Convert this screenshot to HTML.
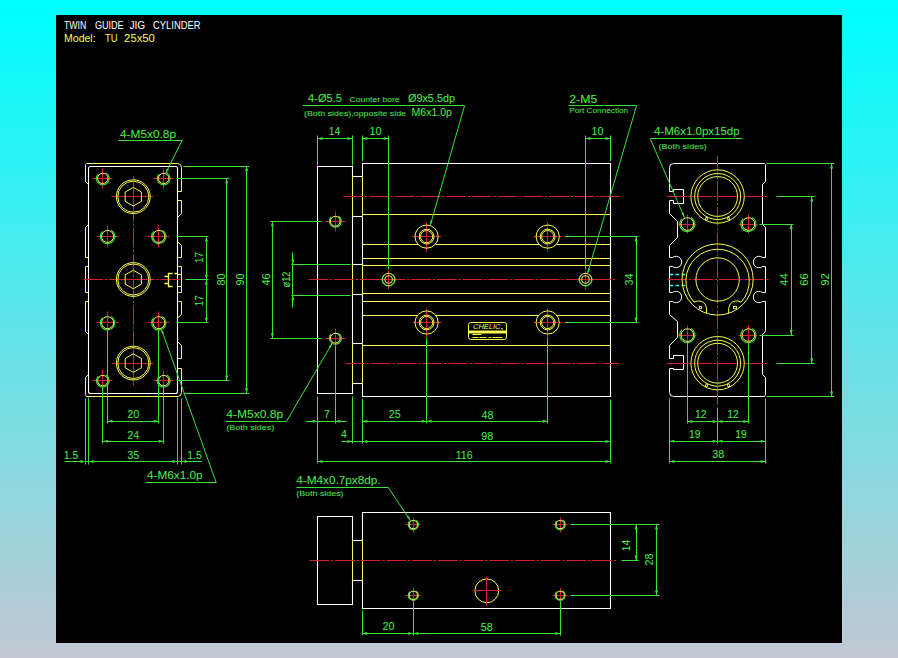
<!DOCTYPE html>
<html lang="en">
<head>
<meta charset="utf-8">
<title>TWIN GUIDE JIG CYLINDER - Model: TU 25x50</title>
<style>
html,body{margin:0;padding:0;}
body{width:898px;height:658px;overflow:hidden;background:linear-gradient(to bottom,#00ffff 0%,#00ffff 1%,#c1c8d3 100%);position:relative;font-family:"Liberation Sans",sans-serif;}
#sheet{position:absolute;left:56px;top:15px;width:786px;height:628px;background:#000;}
svg{position:absolute;left:0;top:0;font-family:"Liberation Sans",sans-serif;}
</style>
</head>
<body>
<div id="sheet"></div>
<svg width="898" height="658" viewBox="0 0 898 658" fill="none" stroke-linecap="butt">
<path d="M177.5,163.5 A4,4 0 0 1 181.5,167.5 L181.5,191.5 L177.5,191.5 L177.5,189.5 L167.5,189.5 L167.5,203.5 L177.5,203.5 L177.5,200.5 L181.5,200.5 L181.5,213.5 L173.5,221.5 L173.5,237.5 L181.5,245.5 L181.5,257.5 L178.5,257.5 A5.7,5.7 0 1 0 178.5,266.5 L181.5,266.5 L181.5,292.5 L178.5,292.5 A5.7,5.7 0 1 0 178.5,301.5 L181.5,301.5 L181.5,314.5 L173.5,321.5 L173.5,337.5 L181.5,345.5 L181.5,358.5 L177.5,358.5 L177.5,355.5 L167.5,355.5 L167.5,369.5 L177.5,369.5 L177.5,368.5 L181.5,368.5 L181.5,392.5 A4,4 0 0 1 177.5,396.5 L86.5,396.5 L85.5,394.5 L85.5,377.5 L88.5,374.5 L88.5,334.5 L85.5,331.5 L85.5,301.5 L88.5,301.5 A5.7,5.7 0 1 0 88.5,292.5 L85.5,292.5 L85.5,266.5 L88.5,266.5 A5.7,5.7 0 1 0 88.5,257.5 L85.5,257.5 L85.5,227.5 L88.5,224.5 L88.5,184.5 L85.5,181.5 L85.5,164.5 L86.5,163.5 Z" stroke="#fafa50" stroke-width="1" fill="none"/>
<line x1="177.5" y1="274.5" x2="181.5" y2="274.5" stroke="#fafa50" stroke-width="1"/>
<line x1="177.5" y1="286.5" x2="181.5" y2="286.5" stroke="#fafa50" stroke-width="1"/>
<rect x="88.5" y="166.5" width="89" height="227" rx="2" stroke="#ffffff" stroke-width="1.1" fill="#000"/>
<line x1="83.5" y1="279.5" x2="182.5" y2="279.5" stroke="#d8202c" stroke-width="1" stroke-dasharray="19.7 1.8 2.4 1.8"/>
<line x1="133.5" y1="176.5" x2="133.5" y2="385.5" stroke="#d8202c" stroke-width="1" stroke-dasharray="19.7 1.8 2.4 1.8"/>
<path d="M172.5,273.5 H168.5 V286.5 H172.5 M174.5,273.5 H177.5 M164.5,276.5 H168.5 M164.5,283.5 H168.5" stroke="#fafa50" stroke-width="1.3" fill="none"/>
<line x1="92.5" y1="178.5" x2="112.5" y2="178.5" stroke="#d8202c" stroke-width="1"/>
<line x1="102.5" y1="168.5" x2="102.5" y2="188.5" stroke="#d8202c" stroke-width="1"/>
<path d="M106,172.9 A6.4,6.4 0 1 1 98.3,173.9" stroke="#3ce03c" stroke-width="1.1" fill="none"/>
<circle cx="102.8" cy="178.4" r="5.2" stroke="#fafa50" stroke-width="1" fill="none"/>
<line x1="153.5" y1="178.5" x2="173.5" y2="178.5" stroke="#d8202c" stroke-width="1"/>
<line x1="163.5" y1="168.5" x2="163.5" y2="188.5" stroke="#d8202c" stroke-width="1"/>
<path d="M166.9,172.9 A6.4,6.4 0 1 1 159.2,173.9" stroke="#3ce03c" stroke-width="1.1" fill="none"/>
<circle cx="163.7" cy="178.4" r="5.2" stroke="#fafa50" stroke-width="1" fill="none"/>
<line x1="92.5" y1="380.5" x2="112.5" y2="380.5" stroke="#d8202c" stroke-width="1"/>
<line x1="102.5" y1="370.5" x2="102.5" y2="390.5" stroke="#d8202c" stroke-width="1"/>
<path d="M106,375.1 A6.4,6.4 0 1 1 98.3,376.1" stroke="#3ce03c" stroke-width="1.1" fill="none"/>
<circle cx="102.8" cy="380.6" r="5.2" stroke="#fafa50" stroke-width="1" fill="none"/>
<line x1="153.5" y1="380.5" x2="173.5" y2="380.5" stroke="#d8202c" stroke-width="1"/>
<line x1="163.5" y1="370.5" x2="163.5" y2="390.5" stroke="#d8202c" stroke-width="1"/>
<path d="M166.9,375.1 A6.4,6.4 0 1 1 159.2,376.1" stroke="#3ce03c" stroke-width="1.1" fill="none"/>
<circle cx="163.7" cy="380.6" r="5.2" stroke="#fafa50" stroke-width="1" fill="none"/>
<line x1="96.5" y1="236.5" x2="118.5" y2="236.5" stroke="#d8202c" stroke-width="1"/>
<line x1="107.5" y1="225.5" x2="107.5" y2="247.5" stroke="#d8202c" stroke-width="1"/>
<path d="M111.2,230.2 A7.2,7.2 0 1 1 102.5,231.3" stroke="#3ce03c" stroke-width="1.1" fill="none"/>
<circle cx="107.6" cy="236.4" r="6" stroke="#fafa50" stroke-width="1" fill="none"/>
<line x1="147.5" y1="236.5" x2="169.5" y2="236.5" stroke="#d8202c" stroke-width="1"/>
<line x1="158.5" y1="225.5" x2="158.5" y2="247.5" stroke="#d8202c" stroke-width="1"/>
<path d="M162.4,230.2 A7.2,7.2 0 1 1 153.7,231.3" stroke="#3ce03c" stroke-width="1.1" fill="none"/>
<circle cx="158.8" cy="236.4" r="6" stroke="#fafa50" stroke-width="1" fill="none"/>
<line x1="96.5" y1="322.5" x2="118.5" y2="322.5" stroke="#d8202c" stroke-width="1"/>
<line x1="107.5" y1="311.5" x2="107.5" y2="333.5" stroke="#d8202c" stroke-width="1"/>
<path d="M111.2,316.5 A7.2,7.2 0 1 1 102.5,317.6" stroke="#3ce03c" stroke-width="1.1" fill="none"/>
<circle cx="107.6" cy="322.7" r="6" stroke="#fafa50" stroke-width="1" fill="none"/>
<line x1="147.5" y1="322.5" x2="169.5" y2="322.5" stroke="#d8202c" stroke-width="1"/>
<line x1="158.5" y1="311.5" x2="158.5" y2="333.5" stroke="#d8202c" stroke-width="1"/>
<path d="M162.4,316.5 A7.2,7.2 0 1 1 153.7,317.6" stroke="#3ce03c" stroke-width="1.1" fill="none"/>
<circle cx="158.8" cy="322.7" r="6" stroke="#fafa50" stroke-width="1" fill="none"/>
<line x1="111.5" y1="196.5" x2="153.5" y2="196.5" stroke="#d8202c" stroke-width="1"/>
<line x1="111.5" y1="279.5" x2="153.5" y2="279.5" stroke="#d8202c" stroke-width="1"/>
<line x1="111.5" y1="363.5" x2="153.5" y2="363.5" stroke="#d8202c" stroke-width="1"/>
<line x1="133.5" y1="176.5" x2="133.5" y2="218.5" stroke="#d8202c" stroke-width="1"/>
<line x1="133.5" y1="342.5" x2="133.5" y2="385.5" stroke="#d8202c" stroke-width="1"/>
<circle cx="133.3" cy="196.7" r="16.9" stroke="#fafa50" stroke-width="1" fill="none"/>
<circle cx="133.3" cy="196.7" r="15.5" stroke="#fafa50" stroke-width="1" fill="none"/>
<polygon points="133.3,187.4 141.4,192 141.4,201.3 133.3,206 125.2,201.3 125.2,192" fill="none" stroke="#fafa50" stroke-width="1"/>
<circle cx="133.3" cy="279.5" r="16.9" stroke="#fafa50" stroke-width="1" fill="none"/>
<circle cx="133.3" cy="279.5" r="15.5" stroke="#fafa50" stroke-width="1" fill="none"/>
<polygon points="133.3,270.2 141.4,274.9 141.4,284.1 133.3,288.8 125.2,284.1 125.2,274.9" fill="none" stroke="#fafa50" stroke-width="1"/>
<circle cx="133.3" cy="363.1" r="16.9" stroke="#fafa50" stroke-width="1" fill="none"/>
<circle cx="133.3" cy="363.1" r="15.5" stroke="#fafa50" stroke-width="1" fill="none"/>
<polygon points="133.3,353.8 141.4,358.5 141.4,367.8 133.3,372.4 125.2,367.8 125.2,358.5" fill="none" stroke="#fafa50" stroke-width="1"/>
<text x="120" y="137.6" fill="#48f048" font-size="10.5" text-anchor="start" textLength="56" lengthAdjust="spacingAndGlyphs">4-M5x0.8p</text>
<line x1="118.5" y1="140.5" x2="182.5" y2="140.5" stroke="#3ce03c" stroke-width="1"/>
<line x1="182" y1="140.5" x2="165.6" y2="173.6" stroke="#3ce03c" stroke-width="1"/>
<polygon points="165.6,173.6 166.7,168.6 168.9,169.7" fill="#3ce03c"/>
<line x1="185.5" y1="279.5" x2="208.5" y2="279.5" stroke="#3ce03c" stroke-width="1"/>
<line x1="176.5" y1="236.5" x2="208.5" y2="236.5" stroke="#3ce03c" stroke-width="1"/>
<line x1="176.5" y1="322.5" x2="208.5" y2="322.5" stroke="#3ce03c" stroke-width="1"/>
<line x1="206.5" y1="236.5" x2="206.5" y2="322.5" stroke="#3ce03c" stroke-width="1"/>
<polygon points="206.4,236.4 207.9,241.4 204.9,241.4" fill="#3ce03c"/>
<polygon points="206.4,279.5 204.9,274.5 207.9,274.5" fill="#3ce03c"/>
<polygon points="206.4,279.5 207.9,284.5 204.9,284.5" fill="#3ce03c"/>
<polygon points="206.4,322.7 204.9,317.7 207.9,317.7" fill="#3ce03c"/>
<text x="203" y="257.5" fill="#48f048" font-size="10.5" text-anchor="middle" textLength="11" lengthAdjust="spacingAndGlyphs" transform="rotate(-90 203 257.5)">17</text>
<text x="203" y="300.8" fill="#48f048" font-size="10.5" text-anchor="middle" textLength="11" lengthAdjust="spacingAndGlyphs" transform="rotate(-90 203 300.8)">17</text>
<line x1="176.5" y1="178.5" x2="229.5" y2="178.5" stroke="#3ce03c" stroke-width="1"/>
<line x1="176.5" y1="380.5" x2="229.5" y2="380.5" stroke="#3ce03c" stroke-width="1"/>
<line x1="226.5" y1="178.5" x2="226.5" y2="380.5" stroke="#3ce03c" stroke-width="1"/>
<polygon points="226.7,178.4 228.2,183.4 225.2,183.4" fill="#3ce03c"/>
<polygon points="226.7,380.6 225.2,375.6 228.2,375.6" fill="#3ce03c"/>
<text x="224.5" y="279.5" fill="#48f048" font-size="10.5" text-anchor="middle" textLength="12" lengthAdjust="spacingAndGlyphs" transform="rotate(-90 224.5 279.5)">80</text>
<line x1="183.5" y1="166.5" x2="249.5" y2="166.5" stroke="#3ce03c" stroke-width="1"/>
<line x1="183.5" y1="393.5" x2="249.5" y2="393.5" stroke="#3ce03c" stroke-width="1"/>
<line x1="246.5" y1="166.5" x2="246.5" y2="393.5" stroke="#3ce03c" stroke-width="1"/>
<polygon points="246.6,166.1 248.1,171.1 245.1,171.1" fill="#3ce03c"/>
<polygon points="246.6,393.3 245.1,388.3 248.1,388.3" fill="#3ce03c"/>
<text x="243.8" y="279.5" fill="#48f048" font-size="10.5" text-anchor="middle" textLength="12" lengthAdjust="spacingAndGlyphs" transform="rotate(-90 243.8 279.5)">90</text>
<line x1="85.5" y1="398.5" x2="85.5" y2="464.5" stroke="#3ce03c" stroke-width="1"/>
<line x1="88.5" y1="397.5" x2="88.5" y2="464.5" stroke="#3ce03c" stroke-width="1"/>
<line x1="102.5" y1="385.5" x2="102.5" y2="443.5" stroke="#3ce03c" stroke-width="1"/>
<line x1="107.5" y1="329.5" x2="107.5" y2="423.5" stroke="#3ce03c" stroke-width="1"/>
<line x1="158.5" y1="329.5" x2="158.5" y2="423.5" stroke="#3ce03c" stroke-width="1"/>
<line x1="163.5" y1="385.5" x2="163.5" y2="443.5" stroke="#3ce03c" stroke-width="1"/>
<line x1="177.5" y1="397.5" x2="177.5" y2="464.5" stroke="#3ce03c" stroke-width="1"/>
<line x1="181.5" y1="398.5" x2="181.5" y2="464.5" stroke="#3ce03c" stroke-width="1"/>
<line x1="107.5" y1="421.5" x2="158.5" y2="421.5" stroke="#3ce03c" stroke-width="1"/>
<polygon points="107.6,421.3 112.6,419.8 112.6,422.8" fill="#3ce03c"/>
<polygon points="158.8,421.3 153.8,422.8 153.8,419.8" fill="#3ce03c"/>
<text x="133.2" y="417.9" fill="#48f048" font-size="10.5" text-anchor="middle" textLength="12" lengthAdjust="spacingAndGlyphs">20</text>
<line x1="102.5" y1="441.5" x2="163.5" y2="441.5" stroke="#3ce03c" stroke-width="1"/>
<polygon points="102.8,441.3 107.8,439.8 107.8,442.8" fill="#3ce03c"/>
<polygon points="163.7,441.3 158.7,442.8 158.7,439.8" fill="#3ce03c"/>
<text x="133.2" y="438.8" fill="#48f048" font-size="10.5" text-anchor="middle" textLength="12" lengthAdjust="spacingAndGlyphs">24</text>
<line x1="64.5" y1="461.5" x2="201.5" y2="461.5" stroke="#3ce03c" stroke-width="1"/>
<polygon points="88.7,461.6 93.7,460.1 93.7,463.1" fill="#3ce03c"/>
<polygon points="177.5,461.6 172.5,463.1 172.5,460.1" fill="#3ce03c"/>
<polygon points="85.4,461.6 80.4,463.1 80.4,460.1" fill="#3ce03c"/>
<polygon points="181.3,461.6 186.3,460.1 186.3,463.1" fill="#3ce03c"/>
<text x="133.2" y="458.9" fill="#48f048" font-size="10.5" text-anchor="middle" textLength="12" lengthAdjust="spacingAndGlyphs">35</text>
<text x="63.8" y="459.3" fill="#48f048" font-size="10.5" text-anchor="start" textLength="14.5" lengthAdjust="spacingAndGlyphs">1.5</text>
<text x="187.2" y="459.3" fill="#48f048" font-size="10.5" text-anchor="start" textLength="14.5" lengthAdjust="spacingAndGlyphs">1.5</text>
<text x="147" y="478.7" fill="#48f048" font-size="10.5" text-anchor="start" textLength="55.5" lengthAdjust="spacingAndGlyphs">4-M6x1.0p</text>
<line x1="145.5" y1="482.5" x2="216.5" y2="482.5" stroke="#3ce03c" stroke-width="1"/>
<line x1="216.2" y1="482.5" x2="161.3" y2="329" stroke="#3ce03c" stroke-width="1"/>
<polygon points="161.3,329 164.1,333.3 161.9,334.1" fill="#3ce03c"/>
<path d="M362.5,176.5 V163.5 H610.5 V396.5 H362.5 V383.5" stroke="#ffffff" stroke-width="1.1" fill="none"/>
<path d="M352.5,176.5 V166.5 H317.5 V393.5 H352.5 V383.5" stroke="#ffffff" stroke-width="1.1" fill="none"/>
<line x1="352.5" y1="216.5" x2="352.5" y2="264.5" stroke="#ffffff" stroke-width="1.1"/>
<line x1="362.5" y1="216.5" x2="362.5" y2="264.5" stroke="#ffffff" stroke-width="1.1"/>
<line x1="352.5" y1="294.5" x2="352.5" y2="343.5" stroke="#ffffff" stroke-width="1.1"/>
<line x1="362.5" y1="294.5" x2="362.5" y2="343.5" stroke="#ffffff" stroke-width="1.1"/>
<line x1="352.5" y1="176.5" x2="352.5" y2="216.5" stroke="#fafa50" stroke-width="1"/>
<line x1="362.5" y1="176.5" x2="362.5" y2="216.5" stroke="#fafa50" stroke-width="1"/>
<line x1="352.5" y1="176.5" x2="362.5" y2="176.5" stroke="#ffffff" stroke-width="1.1"/>
<line x1="352.5" y1="216.5" x2="362.5" y2="216.5" stroke="#ffffff" stroke-width="1.1"/>
<line x1="352.5" y1="264.5" x2="352.5" y2="294.5" stroke="#fafa50" stroke-width="1"/>
<line x1="362.5" y1="264.5" x2="362.5" y2="294.5" stroke="#fafa50" stroke-width="1"/>
<line x1="352.5" y1="264.5" x2="362.5" y2="264.5" stroke="#ffffff" stroke-width="1.1"/>
<line x1="352.5" y1="294.5" x2="362.5" y2="294.5" stroke="#ffffff" stroke-width="1.1"/>
<line x1="352.5" y1="343.5" x2="352.5" y2="383.5" stroke="#fafa50" stroke-width="1"/>
<line x1="362.5" y1="343.5" x2="362.5" y2="383.5" stroke="#fafa50" stroke-width="1"/>
<line x1="352.5" y1="343.5" x2="362.5" y2="343.5" stroke="#ffffff" stroke-width="1.1"/>
<line x1="352.5" y1="383.5" x2="362.5" y2="383.5" stroke="#ffffff" stroke-width="1.1"/>
<line x1="362.5" y1="214.5" x2="610.5" y2="214.5" stroke="#fafa50" stroke-width="1"/>
<line x1="362.5" y1="258.5" x2="610.5" y2="258.5" stroke="#fafa50" stroke-width="1"/>
<line x1="362.5" y1="265.5" x2="610.5" y2="265.5" stroke="#fafa50" stroke-width="1"/>
<line x1="362.5" y1="293.5" x2="610.5" y2="293.5" stroke="#fafa50" stroke-width="1"/>
<line x1="362.5" y1="301.5" x2="610.5" y2="301.5" stroke="#fafa50" stroke-width="1"/>
<line x1="362.5" y1="345.5" x2="610.5" y2="345.5" stroke="#fafa50" stroke-width="1"/>
<line x1="362.5" y1="244.5" x2="418.5" y2="244.5" stroke="#fafa50" stroke-width="1"/>
<line x1="435.5" y1="244.5" x2="539.5" y2="244.5" stroke="#fafa50" stroke-width="1"/>
<line x1="556.5" y1="244.5" x2="610.5" y2="244.5" stroke="#fafa50" stroke-width="1"/>
<line x1="362.5" y1="315.5" x2="417.5" y2="315.5" stroke="#fafa50" stroke-width="1"/>
<line x1="435.5" y1="315.5" x2="538.5" y2="315.5" stroke="#fafa50" stroke-width="1"/>
<line x1="556.5" y1="315.5" x2="610.5" y2="315.5" stroke="#fafa50" stroke-width="1"/>
<line x1="343.5" y1="196.5" x2="620.5" y2="196.5" stroke="#d8202c" stroke-width="1" stroke-dasharray="19.7 1.8 2.4 1.8"/>
<line x1="308.5" y1="279.5" x2="616.5" y2="279.5" stroke="#d8202c" stroke-width="1" stroke-dasharray="19.7 1.8 2.4 1.8"/>
<line x1="345.5" y1="363.5" x2="618.5" y2="363.5" stroke="#d8202c" stroke-width="1" stroke-dasharray="19.7 1.8 2.4 1.8"/>
<line x1="325.5" y1="221.5" x2="345.5" y2="221.5" stroke="#d8202c" stroke-width="1"/>
<line x1="335.5" y1="211.5" x2="335.5" y2="231.5" stroke="#d8202c" stroke-width="1"/>
<path d="M338.3,216 A6,6 0 1 1 331.1,217" stroke="#3ce03c" stroke-width="1.1" fill="none"/>
<circle cx="335.3" cy="221.2" r="4.9" stroke="#fafa50" stroke-width="1" fill="none"/>
<line x1="325.5" y1="338.5" x2="345.5" y2="338.5" stroke="#d8202c" stroke-width="1"/>
<line x1="335.5" y1="328.5" x2="335.5" y2="348.5" stroke="#d8202c" stroke-width="1"/>
<path d="M338.3,333 A6,6 0 1 1 331.1,334" stroke="#3ce03c" stroke-width="1.1" fill="none"/>
<circle cx="335.3" cy="338.2" r="4.9" stroke="#fafa50" stroke-width="1" fill="none"/>
<line x1="412.5" y1="236.5" x2="441.5" y2="236.5" stroke="#d8202c" stroke-width="1"/>
<line x1="426.5" y1="222.5" x2="426.5" y2="251.5" stroke="#d8202c" stroke-width="1"/>
<circle cx="426.6" cy="236.6" r="11.6" stroke="#fafa50" stroke-width="1" fill="none"/>
<circle cx="426.6" cy="236.6" r="7.4" stroke="#fafa50" stroke-width="1" fill="none"/>
<circle cx="426.6" cy="236.6" r="6.1" stroke="#fafa50" stroke-width="1" fill="none"/>
<line x1="412.5" y1="322.5" x2="441.5" y2="322.5" stroke="#d8202c" stroke-width="1"/>
<line x1="426.5" y1="308.5" x2="426.5" y2="337.5" stroke="#d8202c" stroke-width="1"/>
<circle cx="426.6" cy="322.5" r="11.6" stroke="#fafa50" stroke-width="1" fill="none"/>
<circle cx="426.6" cy="322.5" r="7.4" stroke="#fafa50" stroke-width="1" fill="none"/>
<circle cx="426.6" cy="322.5" r="6.1" stroke="#fafa50" stroke-width="1" fill="none"/>
<line x1="533.5" y1="236.5" x2="562.5" y2="236.5" stroke="#d8202c" stroke-width="1"/>
<line x1="547.5" y1="222.5" x2="547.5" y2="251.5" stroke="#d8202c" stroke-width="1"/>
<circle cx="547.7" cy="236.6" r="11.6" stroke="#fafa50" stroke-width="1" fill="none"/>
<circle cx="547.7" cy="236.6" r="7.4" stroke="#fafa50" stroke-width="1" fill="none"/>
<circle cx="547.7" cy="236.6" r="6.1" stroke="#fafa50" stroke-width="1" fill="none"/>
<line x1="533.5" y1="322.5" x2="562.5" y2="322.5" stroke="#d8202c" stroke-width="1"/>
<line x1="547.5" y1="308.5" x2="547.5" y2="337.5" stroke="#d8202c" stroke-width="1"/>
<circle cx="547.7" cy="322.5" r="11.6" stroke="#fafa50" stroke-width="1" fill="none"/>
<circle cx="547.7" cy="322.5" r="7.4" stroke="#fafa50" stroke-width="1" fill="none"/>
<circle cx="547.7" cy="322.5" r="6.1" stroke="#fafa50" stroke-width="1" fill="none"/>
<line x1="379.5" y1="279.5" x2="398.5" y2="279.5" stroke="#d8202c" stroke-width="1"/>
<line x1="388.5" y1="270.5" x2="388.5" y2="289.5" stroke="#d8202c" stroke-width="1"/>
<circle cx="388.6" cy="279.5" r="6.2" stroke="#fafa50" stroke-width="1" fill="none"/>
<path d="M392.8,274.4 A6.6,6.6 0 1 1 384.4,274.4" stroke="#3ce03c" stroke-width="1" fill="none"/>
<circle cx="388.6" cy="279.5" r="3.9" stroke="#fafa50" stroke-width="1" fill="none"/>
<line x1="576.5" y1="279.5" x2="595.5" y2="279.5" stroke="#d8202c" stroke-width="1"/>
<line x1="585.5" y1="270.5" x2="585.5" y2="289.5" stroke="#d8202c" stroke-width="1"/>
<circle cx="585.5" cy="279.5" r="6.2" stroke="#fafa50" stroke-width="1" fill="none"/>
<path d="M589.7,274.4 A6.6,6.6 0 1 1 581.3,274.4" stroke="#3ce03c" stroke-width="1" fill="none"/>
<circle cx="585.5" cy="279.5" r="3.9" stroke="#fafa50" stroke-width="1" fill="none"/>
<rect x="468.5" y="322.5" width="38" height="17" rx="2.2" stroke="#fafa50" stroke-width="1" fill="none"/>
<rect x="468.5" y="330.5" width="38" height="3" rx="0" stroke="#fafa50" stroke-width="0" fill="#fafa50"/>
<text x="473" y="329.1" fill="#fafa50" font-size="6.6" text-anchor="start" textLength="27.5" lengthAdjust="spacingAndGlyphs" style="font-style:italic">CHELIC</text>
<path d="M472.5,334.5 H481.5 M472.5,337.5 H478.5 M479.5,337.5 H486.5 M488.5,337.5 H491.5 M492.5,337.5 H502.5" stroke="#fafa50" stroke-width="1.2" fill="none"/>
<path d="M501,328 l1.5,1.5 M502.5,328 l-1.5,1.5" stroke="#fafa50" stroke-width="0.8" fill="none"/>
<text x="308" y="102" fill="#48f048" font-size="10.5" text-anchor="start" textLength="34" lengthAdjust="spacingAndGlyphs">4-&#216;5.5</text>
<text x="349.6" y="102" fill="#48f048" font-size="7.8" text-anchor="start" textLength="50" lengthAdjust="spacingAndGlyphs">Counter bore</text>
<text x="408" y="102" fill="#48f048" font-size="10.5" text-anchor="start" textLength="47" lengthAdjust="spacingAndGlyphs">&#216;9x5.5dp</text>
<line x1="302.5" y1="105.5" x2="464.5" y2="105.5" stroke="#3ce03c" stroke-width="1"/>
<line x1="464.6" y1="105.5" x2="430.2" y2="225.6" stroke="#3ce03c" stroke-width="1"/>
<polygon points="430.2,225.6 430.4,220.5 432.7,221.1" fill="#3ce03c"/>
<text x="304" y="115.9" fill="#48f048" font-size="7.8" text-anchor="start" textLength="102" lengthAdjust="spacingAndGlyphs">(Both sides),opposite side</text>
<text x="411.5" y="115.9" fill="#48f048" font-size="10.5" text-anchor="start" textLength="40.5" lengthAdjust="spacingAndGlyphs">M6x1.0p</text>
<text x="569.2" y="102.9" fill="#48f048" font-size="10.5" text-anchor="start" textLength="28.2" lengthAdjust="spacingAndGlyphs">2-M5</text>
<line x1="568.5" y1="105.5" x2="636.5" y2="105.5" stroke="#3ce03c" stroke-width="1"/>
<line x1="636.6" y1="105.5" x2="587.6" y2="273.4" stroke="#3ce03c" stroke-width="1"/>
<polygon points="587.6,273.4 587.8,268.3 590.2,268.9" fill="#3ce03c"/>
<text x="569.2" y="113.4" fill="#48f048" font-size="7.8" text-anchor="start" textLength="59" lengthAdjust="spacingAndGlyphs">Port Connection</text>
<line x1="317.5" y1="135.5" x2="317.5" y2="165.5" stroke="#3ce03c" stroke-width="1"/>
<line x1="352.5" y1="135.5" x2="352.5" y2="165.5" stroke="#3ce03c" stroke-width="1"/>
<line x1="317.5" y1="138.5" x2="352.5" y2="138.5" stroke="#3ce03c" stroke-width="1"/>
<polygon points="317.5,138.6 322.5,137.1 322.5,140.1" fill="#3ce03c"/>
<polygon points="352.5,138.6 347.5,140.1 347.5,137.1" fill="#3ce03c"/>
<text x="334.6" y="134.7" fill="#48f048" font-size="10.5" text-anchor="middle" textLength="11.5" lengthAdjust="spacingAndGlyphs">14</text>
<line x1="362.5" y1="135.5" x2="362.5" y2="161.5" stroke="#3ce03c" stroke-width="1"/>
<line x1="388.5" y1="135.5" x2="388.5" y2="269.5" stroke="#3ce03c" stroke-width="1"/>
<line x1="362.5" y1="138.5" x2="388.5" y2="138.5" stroke="#3ce03c" stroke-width="1"/>
<polygon points="362.4,138.6 367.4,137.1 367.4,140.1" fill="#3ce03c"/>
<polygon points="388.6,138.6 383.6,140.1 383.6,137.1" fill="#3ce03c"/>
<text x="375.5" y="134.7" fill="#48f048" font-size="10.5" text-anchor="middle" textLength="12" lengthAdjust="spacingAndGlyphs">10</text>
<line x1="585.5" y1="135.5" x2="585.5" y2="269.5" stroke="#3ce03c" stroke-width="1"/>
<line x1="610.5" y1="135.5" x2="610.5" y2="161.5" stroke="#3ce03c" stroke-width="1"/>
<line x1="585.5" y1="138.5" x2="610.5" y2="138.5" stroke="#3ce03c" stroke-width="1"/>
<polygon points="585.5,138.6 590.5,137.1 590.5,140.1" fill="#3ce03c"/>
<polygon points="610.4,138.6 605.4,140.1 605.4,137.1" fill="#3ce03c"/>
<text x="597.6" y="134.7" fill="#48f048" font-size="10.5" text-anchor="middle" textLength="12" lengthAdjust="spacingAndGlyphs">10</text>
<line x1="270.5" y1="221.5" x2="321.5" y2="221.5" stroke="#3ce03c" stroke-width="1"/>
<line x1="270.5" y1="338.5" x2="321.5" y2="338.5" stroke="#3ce03c" stroke-width="1"/>
<line x1="272.5" y1="221.5" x2="272.5" y2="338.5" stroke="#3ce03c" stroke-width="1"/>
<polygon points="272.4,221.2 273.9,226.2 270.9,226.2" fill="#3ce03c"/>
<polygon points="272.4,338.2 270.9,333.2 273.9,333.2" fill="#3ce03c"/>
<text x="269.6" y="279.5" fill="#48f048" font-size="10.5" text-anchor="middle" textLength="12" lengthAdjust="spacingAndGlyphs" transform="rotate(-90 269.6 279.5)">46</text>
<line x1="291.5" y1="264.5" x2="350.5" y2="264.5" stroke="#3ce03c" stroke-width="1"/>
<line x1="291.5" y1="295.5" x2="350.5" y2="295.5" stroke="#3ce03c" stroke-width="1"/>
<line x1="292.5" y1="252.5" x2="292.5" y2="307.5" stroke="#3ce03c" stroke-width="1"/>
<polygon points="292.8,264.4 291.3,259.4 294.3,259.4" fill="#3ce03c"/>
<polygon points="292.8,295.2 294.3,300.2 291.3,300.2" fill="#3ce03c"/>
<text x="289.6" y="279.5" fill="#48f048" font-size="10.5" text-anchor="middle" textLength="16" lengthAdjust="spacingAndGlyphs" transform="rotate(-90 289.6 279.5)">&#248;12</text>
<line x1="564.5" y1="236.5" x2="638.5" y2="236.5" stroke="#3ce03c" stroke-width="1"/>
<line x1="564.5" y1="322.5" x2="638.5" y2="322.5" stroke="#3ce03c" stroke-width="1"/>
<line x1="636.5" y1="236.5" x2="636.5" y2="322.5" stroke="#3ce03c" stroke-width="1"/>
<polygon points="636,236.6 637.5,241.6 634.5,241.6" fill="#3ce03c"/>
<polygon points="636,322.5 634.5,317.5 637.5,317.5" fill="#3ce03c"/>
<text x="633" y="279.5" fill="#48f048" font-size="10.5" text-anchor="middle" textLength="12" lengthAdjust="spacingAndGlyphs" transform="rotate(-90 633 279.5)">34</text>
<line x1="317.5" y1="396.5" x2="317.5" y2="463.5" stroke="#3ce03c" stroke-width="1"/>
<line x1="335.5" y1="345.5" x2="335.5" y2="423.5" stroke="#3ce03c" stroke-width="1"/>
<line x1="305.5" y1="421.5" x2="346.5" y2="421.5" stroke="#3ce03c" stroke-width="1"/>
<polygon points="317.6,421.3 312.6,422.8 312.6,419.8" fill="#3ce03c"/>
<polygon points="335.4,421.3 340.4,419.8 340.4,422.8" fill="#3ce03c"/>
<text x="327" y="417.6" fill="#48f048" font-size="10.5" text-anchor="middle">7</text>
<line x1="352.5" y1="396.5" x2="352.5" y2="443.5" stroke="#3ce03c" stroke-width="1"/>
<line x1="362.5" y1="398.5" x2="362.5" y2="443.5" stroke="#3ce03c" stroke-width="1"/>
<line x1="426.5" y1="337.5" x2="426.5" y2="423.5" stroke="#3ce03c" stroke-width="1"/>
<line x1="547.5" y1="337.5" x2="547.5" y2="423.5" stroke="#3ce03c" stroke-width="1"/>
<line x1="362.5" y1="421.5" x2="547.5" y2="421.5" stroke="#3ce03c" stroke-width="1"/>
<polygon points="362.4,421.3 367.4,419.8 367.4,422.8" fill="#3ce03c"/>
<polygon points="426.6,421.3 421.6,422.8 421.6,419.8" fill="#3ce03c"/>
<polygon points="426.6,421.3 431.6,419.8 431.6,422.8" fill="#3ce03c"/>
<polygon points="547.7,421.3 542.7,422.8 542.7,419.8" fill="#3ce03c"/>
<text x="394.8" y="417.6" fill="#48f048" font-size="10.5" text-anchor="middle" textLength="12" lengthAdjust="spacingAndGlyphs">25</text>
<text x="487.5" y="418.8" fill="#48f048" font-size="10.5" text-anchor="middle" textLength="12" lengthAdjust="spacingAndGlyphs">48</text>
<line x1="341.5" y1="441.5" x2="610.5" y2="441.5" stroke="#3ce03c" stroke-width="1"/>
<polygon points="352.5,441.4 347.5,442.9 347.5,439.9" fill="#3ce03c"/>
<polygon points="362.4,441.4 367.4,439.9 367.4,442.9" fill="#3ce03c"/>
<polygon points="610.4,441.4 605.4,442.9 605.4,439.9" fill="#3ce03c"/>
<text x="344" y="438.2" fill="#48f048" font-size="10.5" text-anchor="middle">4</text>
<text x="487.2" y="439.6" fill="#48f048" font-size="10.5" text-anchor="middle" textLength="12" lengthAdjust="spacingAndGlyphs">98</text>
<line x1="317.5" y1="461.5" x2="610.5" y2="461.5" stroke="#3ce03c" stroke-width="1"/>
<polygon points="317.6,461.5 322.6,460 322.6,463" fill="#3ce03c"/>
<polygon points="610.4,461.5 605.4,463 605.4,460" fill="#3ce03c"/>
<text x="464.2" y="459.3" fill="#48f048" font-size="10.5" text-anchor="middle" textLength="17" lengthAdjust="spacingAndGlyphs">116</text>
<line x1="610.5" y1="399.5" x2="610.5" y2="463.5" stroke="#3ce03c" stroke-width="1"/>
<text x="226.2" y="417.6" fill="#48f048" font-size="10.5" text-anchor="start" textLength="57" lengthAdjust="spacingAndGlyphs">4-M5x0.8p</text>
<line x1="225.5" y1="421.5" x2="286.5" y2="421.5" stroke="#3ce03c" stroke-width="1"/>
<line x1="286.4" y1="421.5" x2="332.3" y2="343" stroke="#3ce03c" stroke-width="1"/>
<polygon points="332.3,343 330.8,347.9 328.7,346.7" fill="#3ce03c"/>
<text x="226.2" y="429.7" fill="#48f048" font-size="7.8" text-anchor="start" textLength="48" lengthAdjust="spacingAndGlyphs">(Both sides)</text>
<path d="M673.5,163.5 A4,4 0 0 0 669.5,167.5 L669.5,191.5 L673.5,191.5 L673.5,189.5 L683.5,189.5 L683.5,203.5 L673.5,203.5 L673.5,200.5 L669.5,200.5 L669.5,213.5 L677.5,221.5 L677.5,237.5 L669.5,245.5 L669.5,257.5 L672.5,257.5 A5.7,5.7 0 1 1 672.5,266.5 L669.5,266.5 L669.5,292.5 L672.5,292.5 A5.7,5.7 0 1 1 672.5,301.5 L669.5,301.5 L669.5,314.5 L677.5,321.5 L677.5,337.5 L669.5,345.5 L669.5,358.5 L673.5,358.5 L673.5,355.5 L683.5,355.5 L683.5,369.5 L673.5,369.5 L673.5,368.5 L669.5,368.5 L669.5,392.5 A4,4 0 0 0 673.5,396.5 L764.5,396.5 L765.5,394.5 L765.5,377.5 L762.5,374.5 L762.5,334.5 L765.5,331.5 L765.5,301.5 L762.5,301.5 A5.7,5.7 0 1 1 762.5,292.5 L765.5,292.5 L765.5,266.5 L762.5,266.5 A5.7,5.7 0 1 1 762.5,257.5 L765.5,257.5 L765.5,227.5 L762.5,224.5 L762.5,184.5 L765.5,181.5 L765.5,164.5 L764.5,163.5 Z" stroke="#ffffff" stroke-width="1" fill="none"/>
<line x1="669.5" y1="274.5" x2="686.5" y2="274.5" stroke="#30ffff" stroke-width="1.4" stroke-dasharray="3.6 2.4"/>
<line x1="669.5" y1="285.5" x2="686.5" y2="285.5" stroke="#30ffff" stroke-width="1.4" stroke-dasharray="3.6 2.4"/>
<line x1="717.5" y1="155.5" x2="717.5" y2="405.5" stroke="#d8202c" stroke-width="1" stroke-dasharray="19.7 1.8 2.4 1.8"/>
<line x1="666.5" y1="196.5" x2="769.5" y2="196.5" stroke="#d8202c" stroke-width="1" stroke-dasharray="19.7 1.8 2.4 1.8"/>
<line x1="667.5" y1="279.5" x2="770.5" y2="279.5" stroke="#d8202c" stroke-width="1" stroke-dasharray="19.7 1.8 2.4 1.8"/>
<line x1="666.5" y1="363.5" x2="769.5" y2="363.5" stroke="#d8202c" stroke-width="1" stroke-dasharray="19.7 1.8 2.4 1.8"/>
<circle cx="717.6" cy="196.5" r="26.7" stroke="#fafa50" stroke-width="1" fill="none"/>
<circle cx="717.6" cy="196.5" r="23" stroke="#fafa50" stroke-width="1" fill="none"/>
<circle cx="717.6" cy="196.5" r="19.9" stroke="#fafa50" stroke-width="1" fill="none"/>
<ellipse cx="706.6" cy="218.7" rx="1" ry="1.6" transform="rotate(30 706.6 218.7)" stroke="#fafa50" stroke-width="0.9" fill="none"/>
<ellipse cx="728.6" cy="218.7" rx="1" ry="1.6" transform="rotate(-30 728.6 218.7)" stroke="#fafa50" stroke-width="0.9" fill="none"/>
<circle cx="717.6" cy="363.2" r="26.7" stroke="#fafa50" stroke-width="1" fill="none"/>
<circle cx="717.6" cy="363.2" r="23" stroke="#fafa50" stroke-width="1" fill="none"/>
<circle cx="717.6" cy="363.2" r="19.9" stroke="#fafa50" stroke-width="1" fill="none"/>
<ellipse cx="706.6" cy="385.4" rx="1" ry="1.6" transform="rotate(30 706.6 385.4)" stroke="#fafa50" stroke-width="0.9" fill="none"/>
<ellipse cx="728.6" cy="385.4" rx="1" ry="1.6" transform="rotate(-30 728.6 385.4)" stroke="#fafa50" stroke-width="0.9" fill="none"/>
<circle cx="717.6" cy="279.5" r="35.6" stroke="#fafa50" stroke-width="1" fill="none"/>
<circle cx="717.6" cy="279.5" r="21.7" stroke="#fafa50" stroke-width="1" fill="none"/>
<path d="M694,302.1 A31.7,31.7 0 1 1 741.2,302.1" stroke="#fafa50" stroke-width="1" fill="none"/>
<path d="M694,302.1 Q700.6,299 705.1,304 Q707.1,307.5 706.6,313.3" stroke="#fafa50" stroke-width="1" fill="none"/>
<rect x="699.5" y="306.5" width="2" height="2" rx="0" stroke="#fafa50" stroke-width="0.9" fill="none"/>
<path d="M741.2,302.1 Q734.6,299 730.1,304 Q728.1,307.5 728.6,313.3" stroke="#fafa50" stroke-width="1" fill="none"/>
<rect x="733.5" y="306.5" width="3" height="2" rx="0" stroke="#fafa50" stroke-width="0.9" fill="none"/>
<line x1="677.5" y1="224.5" x2="696.5" y2="224.5" stroke="#d8202c" stroke-width="1"/>
<line x1="687.5" y1="214.5" x2="687.5" y2="233.5" stroke="#d8202c" stroke-width="1"/>
<path d="M691.1,217.4 A7.6,7.6 0 1 1 681.9,218.6" stroke="#3ce03c" stroke-width="1.1" fill="none"/>
<circle cx="687.3" cy="224" r="6.3" stroke="#fafa50" stroke-width="1" fill="none"/>
<line x1="677.5" y1="335.5" x2="696.5" y2="335.5" stroke="#d8202c" stroke-width="1"/>
<line x1="687.5" y1="325.5" x2="687.5" y2="344.5" stroke="#d8202c" stroke-width="1"/>
<path d="M691.1,328.5 A7.6,7.6 0 1 1 681.9,329.7" stroke="#3ce03c" stroke-width="1.1" fill="none"/>
<circle cx="687.3" cy="335.1" r="6.3" stroke="#fafa50" stroke-width="1" fill="none"/>
<line x1="738.5" y1="224.5" x2="757.5" y2="224.5" stroke="#d8202c" stroke-width="1"/>
<line x1="748.5" y1="214.5" x2="748.5" y2="233.5" stroke="#d8202c" stroke-width="1"/>
<path d="M752.2,217.4 A7.6,7.6 0 1 1 743,218.6" stroke="#3ce03c" stroke-width="1.1" fill="none"/>
<circle cx="748.4" cy="224" r="6.3" stroke="#fafa50" stroke-width="1" fill="none"/>
<line x1="738.5" y1="335.5" x2="757.5" y2="335.5" stroke="#d8202c" stroke-width="1"/>
<line x1="748.5" y1="325.5" x2="748.5" y2="344.5" stroke="#d8202c" stroke-width="1"/>
<path d="M752.2,328.5 A7.6,7.6 0 1 1 743,329.7" stroke="#3ce03c" stroke-width="1.1" fill="none"/>
<circle cx="748.4" cy="335.1" r="6.3" stroke="#fafa50" stroke-width="1" fill="none"/>
<text x="654" y="135.4" fill="#48f048" font-size="10.5" text-anchor="start" textLength="85.6" lengthAdjust="spacingAndGlyphs">4-M6x1.0px15dp</text>
<line x1="742.5" y1="138.5" x2="650.5" y2="138.5" stroke="#3ce03c" stroke-width="1"/>
<line x1="650.1" y1="138.5" x2="684.4" y2="217.3" stroke="#3ce03c" stroke-width="1"/>
<polygon points="684.4,217.3 681.3,213.2 683.5,212.2" fill="#3ce03c"/>
<text x="658.4" y="148.6" fill="#48f048" font-size="7.8" text-anchor="start" textLength="48.4" lengthAdjust="spacingAndGlyphs">(Both sides)</text>
<line x1="759.5" y1="224.5" x2="793.5" y2="224.5" stroke="#3ce03c" stroke-width="1"/>
<line x1="759.5" y1="335.5" x2="793.5" y2="335.5" stroke="#3ce03c" stroke-width="1"/>
<line x1="791.5" y1="224.5" x2="791.5" y2="335.5" stroke="#3ce03c" stroke-width="1"/>
<polygon points="791.2,224 792.7,229 789.7,229" fill="#3ce03c"/>
<polygon points="791.2,335.1 789.7,330.1 792.7,330.1" fill="#3ce03c"/>
<text x="787.6" y="279.5" fill="#48f048" font-size="10.5" text-anchor="middle" textLength="12.6" lengthAdjust="spacingAndGlyphs" transform="rotate(-90 787.6 279.5)">44</text>
<line x1="776.5" y1="196.5" x2="814.5" y2="196.5" stroke="#3ce03c" stroke-width="1"/>
<line x1="776.5" y1="363.5" x2="814.5" y2="363.5" stroke="#3ce03c" stroke-width="1"/>
<line x1="811.5" y1="196.5" x2="811.5" y2="363.5" stroke="#3ce03c" stroke-width="1"/>
<polygon points="811.8,196.5 813.3,201.5 810.3,201.5" fill="#3ce03c"/>
<polygon points="811.8,363.2 810.3,358.2 813.3,358.2" fill="#3ce03c"/>
<text x="808.2" y="279.5" fill="#48f048" font-size="10.5" text-anchor="middle" textLength="12.6" lengthAdjust="spacingAndGlyphs" transform="rotate(-90 808.2 279.5)">66</text>
<line x1="766.5" y1="163.5" x2="834.5" y2="163.5" stroke="#3ce03c" stroke-width="1"/>
<line x1="766.5" y1="396.5" x2="834.5" y2="396.5" stroke="#3ce03c" stroke-width="1"/>
<line x1="831.5" y1="163.5" x2="831.5" y2="396.5" stroke="#3ce03c" stroke-width="1"/>
<polygon points="831.6,163.4 833.1,168.4 830.1,168.4" fill="#3ce03c"/>
<polygon points="831.6,396.4 830.1,391.4 833.1,391.4" fill="#3ce03c"/>
<text x="828.6" y="279.5" fill="#48f048" font-size="10.5" text-anchor="middle" textLength="12.6" lengthAdjust="spacingAndGlyphs" transform="rotate(-90 828.6 279.5)">92</text>
<line x1="687.5" y1="342.5" x2="687.5" y2="423.5" stroke="#3ce03c" stroke-width="1"/>
<line x1="748.5" y1="342.5" x2="748.5" y2="423.5" stroke="#3ce03c" stroke-width="1"/>
<line x1="717.5" y1="407.5" x2="717.5" y2="443.5" stroke="#3ce03c" stroke-width="1"/>
<line x1="687.5" y1="421.5" x2="748.5" y2="421.5" stroke="#3ce03c" stroke-width="1"/>
<polygon points="687.3,421.4 692.3,419.9 692.3,422.9" fill="#3ce03c"/>
<polygon points="717.6,421.4 712.6,422.9 712.6,419.9" fill="#3ce03c"/>
<polygon points="717.6,421.4 722.6,419.9 722.6,422.9" fill="#3ce03c"/>
<polygon points="748.4,421.4 743.4,422.9 743.4,419.9" fill="#3ce03c"/>
<text x="700.8" y="417.7" fill="#48f048" font-size="10.5" text-anchor="middle" textLength="11.5" lengthAdjust="spacingAndGlyphs">12</text>
<text x="733" y="417.7" fill="#48f048" font-size="10.5" text-anchor="middle" textLength="11.5" lengthAdjust="spacingAndGlyphs">12</text>
<line x1="669.5" y1="398.5" x2="669.5" y2="463.5" stroke="#3ce03c" stroke-width="1"/>
<line x1="765.5" y1="398.5" x2="765.5" y2="463.5" stroke="#3ce03c" stroke-width="1"/>
<line x1="669.5" y1="441.5" x2="765.5" y2="441.5" stroke="#3ce03c" stroke-width="1"/>
<polygon points="669.4,441.3 674.4,439.8 674.4,442.8" fill="#3ce03c"/>
<polygon points="717.6,441.3 712.6,442.8 712.6,439.8" fill="#3ce03c"/>
<polygon points="717.6,441.3 722.6,439.8 722.6,442.8" fill="#3ce03c"/>
<polygon points="765.7,441.3 760.7,442.8 760.7,439.8" fill="#3ce03c"/>
<text x="694.8" y="438" fill="#48f048" font-size="10.5" text-anchor="middle" textLength="11.5" lengthAdjust="spacingAndGlyphs">19</text>
<text x="740.9" y="438" fill="#48f048" font-size="10.5" text-anchor="middle" textLength="11.5" lengthAdjust="spacingAndGlyphs">19</text>
<line x1="669.5" y1="461.5" x2="765.5" y2="461.5" stroke="#3ce03c" stroke-width="1"/>
<polygon points="669.4,461.6 674.4,460.1 674.4,463.1" fill="#3ce03c"/>
<polygon points="765.7,461.6 760.7,463.1 760.7,460.1" fill="#3ce03c"/>
<text x="718.3" y="458.3" fill="#48f048" font-size="10.5" text-anchor="middle" textLength="12" lengthAdjust="spacingAndGlyphs">38</text>
<path d="M352.5,540.5 V516.5 H317.5 V604.5 H352.5 V580.5" stroke="#ffffff" stroke-width="1.1" fill="none"/>
<path d="M362.5,540.5 V512.5 H610.5 V608.5 H362.5 V580.5" stroke="#ffffff" stroke-width="1.1" fill="none"/>
<line x1="352.5" y1="540.5" x2="352.5" y2="580.5" stroke="#fafa50" stroke-width="1"/>
<line x1="362.5" y1="540.5" x2="362.5" y2="580.5" stroke="#fafa50" stroke-width="1"/>
<line x1="352.5" y1="540.5" x2="362.5" y2="540.5" stroke="#ffffff" stroke-width="1.1"/>
<line x1="352.5" y1="580.5" x2="362.5" y2="580.5" stroke="#ffffff" stroke-width="1.1"/>
<line x1="309.5" y1="560.5" x2="617.5" y2="560.5" stroke="#d8202c" stroke-width="1" stroke-dasharray="19.7 1.8 2.4 1.8"/>
<line x1="405.5" y1="524.5" x2="420.5" y2="524.5" stroke="#d8202c" stroke-width="1"/>
<line x1="413.5" y1="517.5" x2="413.5" y2="532.5" stroke="#d8202c" stroke-width="1"/>
<path d="M415.9,520.2 A5.1,5.1 0 1 1 409.7,521" stroke="#3ce03c" stroke-width="1.1" fill="none"/>
<circle cx="413.3" cy="524.6" r="4.1" stroke="#fafa50" stroke-width="1" fill="none"/>
<line x1="405.5" y1="595.5" x2="420.5" y2="595.5" stroke="#d8202c" stroke-width="1"/>
<line x1="413.5" y1="587.5" x2="413.5" y2="602.5" stroke="#d8202c" stroke-width="1"/>
<path d="M415.9,590.9 A5.1,5.1 0 1 1 409.7,591.7" stroke="#3ce03c" stroke-width="1.1" fill="none"/>
<circle cx="413.3" cy="595.3" r="4.1" stroke="#fafa50" stroke-width="1" fill="none"/>
<line x1="552.5" y1="524.5" x2="567.5" y2="524.5" stroke="#d8202c" stroke-width="1"/>
<line x1="560.5" y1="517.5" x2="560.5" y2="532.5" stroke="#d8202c" stroke-width="1"/>
<path d="M562.8,520.2 A5.1,5.1 0 1 1 556.6,521" stroke="#3ce03c" stroke-width="1.1" fill="none"/>
<circle cx="560.2" cy="524.6" r="4.1" stroke="#fafa50" stroke-width="1" fill="none"/>
<line x1="552.5" y1="595.5" x2="567.5" y2="595.5" stroke="#d8202c" stroke-width="1"/>
<line x1="560.5" y1="587.5" x2="560.5" y2="602.5" stroke="#d8202c" stroke-width="1"/>
<path d="M562.8,590.9 A5.1,5.1 0 1 1 556.6,591.7" stroke="#3ce03c" stroke-width="1.1" fill="none"/>
<circle cx="560.2" cy="595.3" r="4.1" stroke="#fafa50" stroke-width="1" fill="none"/>
<circle cx="486.8" cy="590.8" r="11.9" stroke="#fafa50" stroke-width="1" fill="none"/>
<line x1="472.5" y1="590.5" x2="501.5" y2="590.5" stroke="#d8202c" stroke-width="1"/>
<line x1="486.5" y1="576.5" x2="486.5" y2="605.5" stroke="#d8202c" stroke-width="1"/>
<text x="296.2" y="483.9" fill="#48f048" font-size="10.5" text-anchor="start" textLength="84.5" lengthAdjust="spacingAndGlyphs">4-M4x0.7px8dp.</text>
<line x1="296.5" y1="487.5" x2="388.5" y2="487.5" stroke="#3ce03c" stroke-width="1"/>
<line x1="388.3" y1="487.5" x2="410.4" y2="520.6" stroke="#3ce03c" stroke-width="1"/>
<polygon points="410.4,520.6 406.6,517.1 408.6,515.8" fill="#3ce03c"/>
<text x="296.2" y="496.2" fill="#48f048" font-size="7.8" text-anchor="start" textLength="47.4" lengthAdjust="spacingAndGlyphs">(Both sides)</text>
<line x1="362.5" y1="610.5" x2="362.5" y2="635.5" stroke="#3ce03c" stroke-width="1"/>
<line x1="413.5" y1="601.5" x2="413.5" y2="635.5" stroke="#3ce03c" stroke-width="1"/>
<line x1="560.5" y1="601.5" x2="560.5" y2="635.5" stroke="#3ce03c" stroke-width="1"/>
<line x1="362.5" y1="633.5" x2="560.5" y2="633.5" stroke="#3ce03c" stroke-width="1"/>
<polygon points="362,633.4 367,631.9 367,634.9" fill="#3ce03c"/>
<polygon points="413.3,633.4 408.3,634.9 408.3,631.9" fill="#3ce03c"/>
<polygon points="413.3,633.4 418.3,631.9 418.3,634.9" fill="#3ce03c"/>
<polygon points="560.2,633.4 555.2,634.9 555.2,631.9" fill="#3ce03c"/>
<text x="388.4" y="630.2" fill="#48f048" font-size="10.5" text-anchor="middle" textLength="12" lengthAdjust="spacingAndGlyphs">20</text>
<text x="486.8" y="631" fill="#48f048" font-size="10.5" text-anchor="middle" textLength="12" lengthAdjust="spacingAndGlyphs">58</text>
<line x1="570.5" y1="524.5" x2="659.5" y2="524.5" stroke="#3ce03c" stroke-width="1"/>
<line x1="570.5" y1="595.5" x2="659.5" y2="595.5" stroke="#3ce03c" stroke-width="1"/>
<line x1="621.5" y1="560.5" x2="638.5" y2="560.5" stroke="#3ce03c" stroke-width="1"/>
<line x1="636.5" y1="524.5" x2="636.5" y2="560.5" stroke="#3ce03c" stroke-width="1"/>
<polygon points="636,524.6 637.5,529.6 634.5,529.6" fill="#3ce03c"/>
<polygon points="636,560.5 634.5,555.5 637.5,555.5" fill="#3ce03c"/>
<text x="630" y="545.4" fill="#48f048" font-size="10.5" text-anchor="middle" textLength="11.5" lengthAdjust="spacingAndGlyphs" transform="rotate(-90 630 545.4)">14</text>
<line x1="656.5" y1="524.5" x2="656.5" y2="595.5" stroke="#3ce03c" stroke-width="1"/>
<polygon points="656.5,524.6 658,529.6 655,529.6" fill="#3ce03c"/>
<polygon points="656.5,595.3 655,590.3 658,590.3" fill="#3ce03c"/>
<text x="653" y="559.5" fill="#48f048" font-size="10.5" text-anchor="middle" textLength="12" lengthAdjust="spacingAndGlyphs" transform="rotate(-90 653 559.5)">28</text>
<text x="64" y="28.9" fill="#ffffff" font-size="10.5" text-anchor="start" textLength="22.3" lengthAdjust="spacingAndGlyphs">TWIN</text>
<text x="94.9" y="28.9" fill="#ffffff" font-size="10.5" text-anchor="start" textLength="28.8" lengthAdjust="spacingAndGlyphs">GUIDE</text>
<text x="129.4" y="28.9" fill="#ffffff" font-size="10.5" text-anchor="start" textLength="15.7" lengthAdjust="spacingAndGlyphs">JIG</text>
<text x="153.1" y="28.9" fill="#ffffff" font-size="10.5" text-anchor="start" textLength="47.3" lengthAdjust="spacingAndGlyphs">CYLINDER</text>
<text x="64" y="41.7" fill="#fafa50" font-size="10.5" text-anchor="start" textLength="31.6" lengthAdjust="spacingAndGlyphs">Model:</text>
<text x="105" y="41.7" fill="#fafa50" font-size="10.5" text-anchor="start" textLength="12.5" lengthAdjust="spacingAndGlyphs">TU</text>
<text x="124.1" y="41.7" fill="#fafa50" font-size="10.5" text-anchor="start" textLength="30.8" lengthAdjust="spacingAndGlyphs">25x50</text>
</svg>
</body>
</html>
